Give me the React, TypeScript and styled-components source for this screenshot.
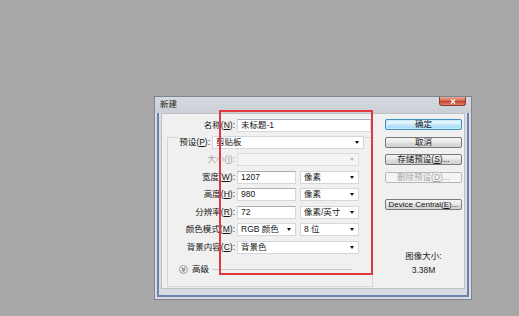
import styled, { createGlobalStyle, css } from "styled-components";

const GlobalStyle = createGlobalStyle`
  html, body {
    margin: 0;
    padding: 0;
  }
  body {
    background: #a8a8a8;
    font-family: "Liberation Sans", "Noto Sans CJK SC", sans-serif;
    font-size: 8.5px;
    color: #151515;
  }
`;

const Desktop = styled.div`
  position: relative;
  width: 519px;
  height: 316px;
  overflow: hidden;
  box-sizing: border-box;
  padding: 96px 0 0 154px;
`;

const Window = styled.div`
  width: 318px;
  height: 204px;
  box-sizing: border-box;
  border: 1px solid #7f858f;
  background: #d9dde3;
  display: flex;
  flex-direction: column;
`;

const TitleBar = styled.div`
  height: 16px;
  flex: none;
  display: flex;
  align-items: flex-start;
  justify-content: space-between;
  padding: 0 5px;
  background: linear-gradient(#d5d9df, #cbd0d7);
`;

const Title = styled.span`
  line-height: 15px;
  color: #222;
`;

const CloseButton = styled.div`
  width: 25px;
  height: 8px;
  border: 1px solid #8f3a2e;
  border-top: none;
  border-radius: 0 0 3px 3px;
  background: linear-gradient(#eaa898, #d36650 48%, #c33f2b 52%, #dc8570);
  display: flex;
  align-items: center;
  justify-content: center;

  svg {
    display: block;
  }
`;

const FrameBody = styled.div`
  flex: 1;
  display: flex;
  padding: 0 2px 2px;
`;

const Frame = styled.div`
  flex: 1;
  display: flex;
  border: 2px solid #6b82b0;
  border-top: none;
  padding: 0 2px 6px;
`;

const Client = styled.div`
  flex: 1;
  display: flex;
  box-sizing: border-box;
  border: 1px solid #bcc1c8;
  background: #f0f0f0;
`;

const LeftPane = styled.div`
  width: 211px;
  padding-top: 5px;
  display: flex;
  flex-direction: column;
`;

const NameRow = styled.div`
  display: grid;
  grid-template-columns: 73px 134px;
  column-gap: 2px;
`;

const Label = styled.div<{ $disabled?: boolean }>`
  height: 13px;
  line-height: 13px;
  text-align: right;
  white-space: nowrap;
  color: ${(p) => (p.$disabled ? "#a3a3a3" : "#151515")};

  u {
    text-decoration: underline;
  }
`;

const GroupBox = styled.div`
  margin: 5px 0 0 5px;
  width: 206px;
  height: 150px;
  box-sizing: border-box;
  border: 1px solid #d6d6d6;
  display: flex;
  flex-direction: column;
`;

const PresetRow = styled.div`
  margin-top: -2px;
  padding-left: 10px;
  display: grid;
  grid-template-columns: 34px 152px;
`;

const PresetLabel = styled(Label)`
  background: #f0f0f0;
  padding-right: 2px;
`;

const Fields = styled.div`
  margin-top: 4px;
  display: flex;
  flex-direction: column;
  gap: 4.6px;
`;

const FieldRow = styled.div`
  display: grid;
  grid-template-columns: 67px auto;
  column-gap: 2px;
`;

const Controls = styled.div`
  display: flex;
  gap: 4px;
`;

const fieldBox = css`
  height: 13px;
  box-sizing: border-box;
  border: 1px solid #d3d8de;
  border-top-color: #a9aeb5;
  background: #fff;
  line-height: 11px;
  padding: 0 3px;
  white-space: nowrap;
  overflow: hidden;
`;

const TextField = styled.div<{ $w: number }>`
  ${fieldBox};
  width: ${(p) => p.$w}px;
`;

const SelectBox = styled.div<{ $w: number; $disabled?: boolean }>`
  ${fieldBox};
  width: ${(p) => p.$w}px;
  display: flex;
  align-items: center;
  padding-right: 4px;
  background: ${(p) => (p.$disabled ? "#f4f4f4" : "#fff")};
  border-color: ${(p) => (p.$disabled ? "#dcdcdc" : "#d3d8de")};

  span {
    flex: 1;
  }
`;

const Arrow = styled.i<{ $disabled?: boolean }>`
  width: 0;
  height: 0;
  border-left: 2.5px solid transparent;
  border-right: 2.5px solid transparent;
  border-top: 3px solid ${(p) => (p.$disabled ? "#b5b5b5" : "#111")};
`;

const AdvancedRow = styled.div`
  margin-top: 11px;
  padding-left: 11px;
  height: 9px;
  display: flex;
  align-items: center;
`;

const Toggle = styled.div`
  width: 9px;
  height: 9px;
  box-sizing: border-box;
  border: 1px solid #9a9a9a;
  border-radius: 50%;
  background: linear-gradient(#ffffff, #e2e2e2);
  display: flex;
  align-items: center;
  justify-content: center;

  svg {
    display: block;
  }
`;

const AdvancedText = styled.span`
  margin-left: 4px;
  line-height: 9px;
`;

const Separator = styled.div`
  flex: 1;
  height: 1px;
  margin: 1px 20px 0 3px;
  background: #cacaca;
`;

const RightPane = styled.div`
  margin-left: 12px;
  width: 77px;
  padding-top: 5px;
  display: flex;
  flex-direction: column;
`;

const ButtonStack = styled.div`
  display: flex;
  flex-direction: column;
  gap: 6.7px;
`;

const Button = styled.div<{ $primary?: boolean; $disabled?: boolean; $latin?: boolean }>`
  height: 11px;
  box-sizing: border-box;
  border: 1px solid #7a7a7a;
  border-radius: 2px;
  background: linear-gradient(#f3f3f3, #ebebeb 48%, #dddddd 52%, #d1d1d1);
  display: flex;
  align-items: center;
  justify-content: center;
  line-height: 9px;
  white-space: nowrap;
  font-size: ${(p) => (p.$latin ? "8px" : "8.5px")};
  color: #151515;

  ${(p) =>
    p.$primary &&
    css`
      border-color: #3c8fc4;
      background: linear-gradient(#eaf6fd, #d9f0fc 48%, #bee6fd 52%, #a7d9f5);
      box-shadow: inset 0 0 0 1px #c8ecfb;
    `}

  ${(p) =>
    p.$disabled &&
    css`
      border-color: #b5b9bd;
      background: #f4f4f4;
      color: #a6a6a6;
    `}
`;

const DeviceButton = styled(Button)`
  margin-top: 16px;
`;

const Info = styled.div`
  margin-top: 40px;
  display: flex;
  flex-direction: column;
  align-items: center;
  gap: 1px;
  line-height: 13px;
  color: #222;
`;

const Highlight = styled.div`
  position: absolute;
  left: 219px;
  top: 110px;
  width: 154px;
  height: 165px;
  box-sizing: border-box;
  border: 2px solid #e03a3c;
  pointer-events: none;
`;

const Select = ({ w, value, disabled }: { w: number; value: string; disabled?: boolean }) => (
  <SelectBox $w={w} $disabled={disabled}>
    <span>{value}</span>
    <Arrow $disabled={disabled} />
  </SelectBox>
);

export default function App() {
  return (
    <>
      <GlobalStyle />
      <Desktop>
        <Window>
          <TitleBar>
            <Title>新建</Title>
            <CloseButton>
              <svg width="6" height="5" viewBox="0 0 6 5">
                <path d="M1 0.5 L5 4.5 M5 0.5 L1 4.5" stroke="#fff" strokeWidth="1.3" />
              </svg>
            </CloseButton>
          </TitleBar>
          <FrameBody>
            <Frame>
              <Client>
                <LeftPane>
                  <NameRow>
                    <Label>
                      名称(<u>N</u>):
                    </Label>
                    <TextField $w={134}>未标题-1</TextField>
                  </NameRow>

                  <GroupBox>
                    <PresetRow>
                      <PresetLabel>
                        预设(<u>P</u>):
                      </PresetLabel>
                      <Select w={152} value="剪贴板" />
                    </PresetRow>

                    <Fields>
                      <FieldRow>
                        <Label $disabled>
                          大小(<u>I</u>):
                        </Label>
                        <Select w={122} value="" disabled />
                      </FieldRow>
                      <FieldRow>
                        <Label>
                          宽度(<u>W</u>):
                        </Label>
                        <Controls>
                          <TextField $w={59}>1207</TextField>
                          <Select w={59} value="像素" />
                        </Controls>
                      </FieldRow>
                      <FieldRow>
                        <Label>
                          高度(<u>H</u>):
                        </Label>
                        <Controls>
                          <TextField $w={59}>980</TextField>
                          <Select w={59} value="像素" />
                        </Controls>
                      </FieldRow>
                      <FieldRow>
                        <Label>
                          分辨率(<u>R</u>):
                        </Label>
                        <Controls>
                          <TextField $w={59}>72</TextField>
                          <Select w={59} value="像素/英寸" />
                        </Controls>
                      </FieldRow>
                      <FieldRow>
                        <Label>
                          颜色模式(<u>M</u>):
                        </Label>
                        <Controls>
                          <Select w={59} value="RGB 颜色" />
                          <Select w={59} value="8 位" />
                        </Controls>
                      </FieldRow>
                      <FieldRow>
                        <Label>
                          背景内容(<u>C</u>):
                        </Label>
                        <Select w={122} value="背景色" />
                      </FieldRow>
                    </Fields>

                    <AdvancedRow>
                      <Toggle>
                        <svg width="5" height="5" viewBox="0 0 5 5">
                          <path
                            d="M0.8 0.6 L2.5 2 L4.2 0.6 M0.8 2.6 L2.5 4 L4.2 2.6"
                            fill="none"
                            stroke="#333"
                            strokeWidth="0.9"
                          />
                        </svg>
                      </Toggle>
                      <AdvancedText>高级</AdvancedText>
                      <Separator />
                    </AdvancedRow>
                  </GroupBox>
                </LeftPane>

                <RightPane>
                  <ButtonStack>
                    <Button $primary>确定</Button>
                    <Button>取消</Button>
                    <Button>
                      存储预设(<u>S</u>)...
                    </Button>
                    <Button $disabled>
                      删除预设(<u>D</u>)...
                    </Button>
                  </ButtonStack>
                  <DeviceButton $latin>
                    Device Central(<u>E</u>)...
                  </DeviceButton>
                  <Info>
                    <span>图像大小:</span>
                    <span>3.38M</span>
                  </Info>
                </RightPane>
              </Client>
            </Frame>
          </FrameBody>
        </Window>
        <Highlight />
      </Desktop>
    </>
  );
}
